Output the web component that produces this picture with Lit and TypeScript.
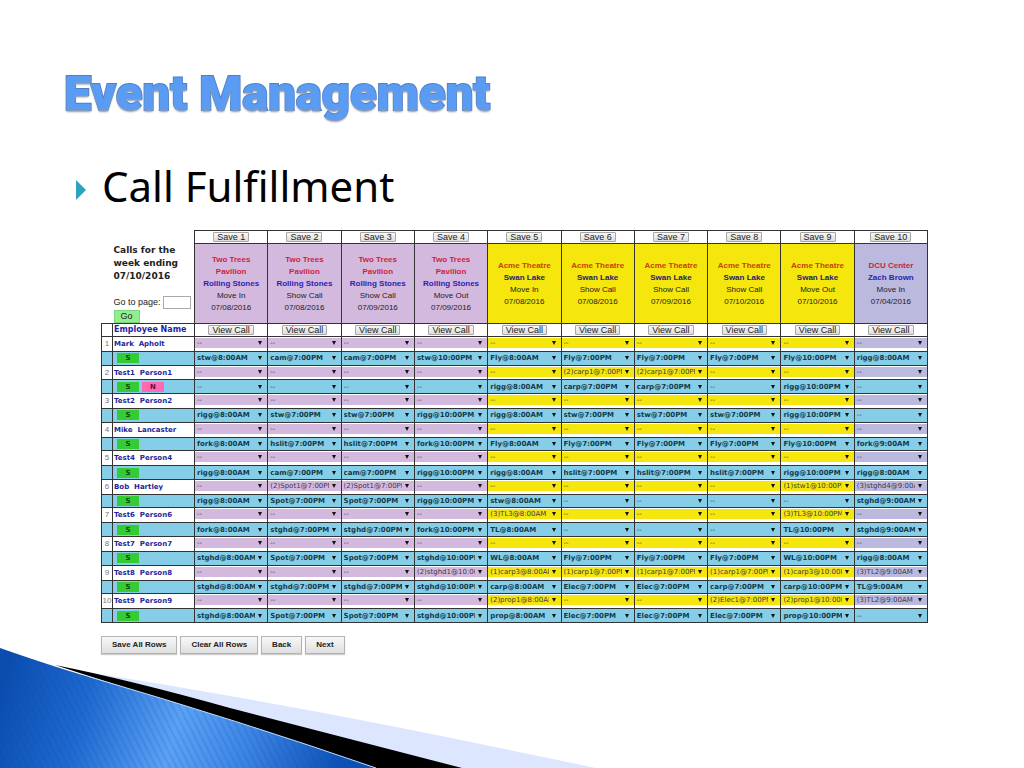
import { LitElement, html, css, svg } from "lit";
import { customElement } from "lit/decorators.js";
import { classMap } from "lit/directives/class-map.js";

interface Call {
  venue: string;
  show: string;
  kind: string;
  date: string;
  tone: string;
}

interface Employee {
  name: string;
  tags: string[];
  requests: string[];
  assigned: string[];
}

const trees = (kind: string, date: string): Call => ({ venue: "Two Trees Pavilion", show: "Rolling Stones", kind, date, tone: "plum" });
const acme = (kind: string, date: string): Call => ({ venue: "Acme Theatre", show: "Swan Lake", kind, date, tone: "yellow" });

const CALLS: Call[] = [
  trees("Move In", "07/08/2016"),
  trees("Show Call", "07/08/2016"),
  trees("Show Call", "07/09/2016"),
  trees("Move Out", "07/09/2016"),
  acme("Move In", "07/08/2016"),
  acme("Show Call", "07/08/2016"),
  acme("Show Call", "07/09/2016"),
  acme("Show Call", "07/10/2016"),
  acme("Move Out", "07/10/2016"),
  { venue: "DCU Center", show: "Zach Brown", kind: "Move In", date: "07/04/2016", tone: "lilac" },
];

const person = (name: string, requests: string, assigned: string, tags = ["S"]): Employee => ({
  name,
  tags,
  requests: requests.split(" "),
  assigned: assigned.split(" "),
});

const EMPLOYEES: Employee[] = [
  person("Mark\u00a0 Apholt", "-- -- -- -- -- -- -- -- -- --",
    "stw@8:00AM cam@7:00PM cam@7:00PM stw@10:00PM Fly@8:00AM Fly@7:00PM Fly@7:00PM Fly@7:00PM Fly@10:00PM rigg@8:00AM"),
  person("Test1\u00a0 Person1", "-- -- -- -- -- (2)carp1@7:00PM (2)carp1@7:00PM -- -- --",
    "-- -- -- -- rigg@8:00AM carp@7:00PM carp@7:00PM -- rigg@10:00PM --", ["S", "N"]),
  person("Test2\u00a0 Person2", "-- -- -- -- -- -- -- -- -- --",
    "rigg@8:00AM stw@7:00PM stw@7:00PM rigg@10:00PM rigg@8:00AM stw@7:00PM stw@7:00PM stw@7:00PM rigg@10:00PM --"),
  person("Mike\u00a0 Lancaster", "-- -- -- -- -- -- -- -- -- --",
    "fork@8:00AM hslit@7:00PM hslit@7:00PM fork@10:00PM Fly@8:00AM Fly@7:00PM Fly@7:00PM Fly@7:00PM Fly@10:00PM fork@9:00AM"),
  person("Test4\u00a0 Person4", "-- -- -- -- -- -- -- -- -- --",
    "rigg@8:00AM cam@7:00PM cam@7:00PM rigg@10:00PM rigg@8:00AM hslit@7:00PM hslit@7:00PM hslit@7:00PM rigg@10:00PM rigg@8:00AM"),
  person("Bob\u00a0 Hartley", "-- (2)Spot1@7:00PM (2)Spot1@7:00PM -- -- -- -- -- (1)stw1@10:00PM (3)stghd4@9:00AM",
    "rigg@8:00AM Spot@7:00PM Spot@7:00PM rigg@10:00PM stw@8:00AM -- -- -- -- stghd@9:00AM"),
  person("Test6\u00a0 Person6", "-- -- -- -- (3)TL3@8:00AM -- -- -- (3)TL3@10:00PM --",
    "fork@8:00AM stghd@7:00PM stghd@7:00PM fork@10:00PM TL@8:00AM -- -- -- TL@10:00PM stghd@9:00AM"),
  person("Test7\u00a0 Person7", "-- -- -- -- -- -- -- -- -- --",
    "stghd@8:00AM Spot@7:00PM Spot@7:00PM stghd@10:00PM WL@8:00AM Fly@7:00PM Fly@7:00PM Fly@7:00PM WL@10:00PM rigg@8:00AM"),
  person("Test8\u00a0 Person8", "-- -- -- (2)stghd1@10:00PM (1)carp3@8:00AM (1)carp1@7:00PM (1)carp1@7:00PM (1)carp1@7:00PM (1)carp3@10:00PM (3)TL2@9:00AM",
    "stghd@8:00AM stghd@7:00PM stghd@7:00PM stghd@10:00PM carp@8:00AM Elec@7:00PM Elec@7:00PM carp@7:00PM carp@10:00PM TL@9:00AM"),
  person("Test9\u00a0 Person9", "-- -- -- -- (2)prop1@8:00AM -- -- (2)Elec1@7:00PM (2)prop1@10:00PM (3)TL2@9:00AM",
    "stghd@8:00AM Spot@7:00PM Spot@7:00PM stghd@10:00PM prop@8:00AM Elec@7:00PM Elec@7:00PM Elec@7:00PM prop@10:00PM --"),
];

@customElement("slide-swoosh")
class SlideSwoosh extends LitElement {
  static styles = css`
    :host { display: block; }
    .art { display: block; }
  `;

  render() {
    return html`<svg class="art" width="600" height="122" viewBox="0 646 600 122" aria-hidden="true">
      ${svg`
      <defs>
        <linearGradient id="sea" gradientUnits="userSpaceOnUse" x1="0" y1="690" x2="330" y2="790">
          <stop offset="0" stop-color="#0a4db0"/>
          <stop offset="0.25" stop-color="#1f69d0"/>
          <stop offset="0.52" stop-color="#5ba2f6"/>
          <stop offset="0.72" stop-color="#3f87e6"/>
          <stop offset="1" stop-color="#0c51b8"/>
        </linearGradient>
        <pattern id="lines" width="6" height="8" patternUnits="userSpaceOnUse" patternTransform="rotate(-27)">
          <path d="M1 0V8" stroke="#0b4499" stroke-width="1" opacity="0.28"/>
        </pattern>
      </defs>
      <path d="M75 670 Q 290 704 500 748 L596 768 H440 Z" fill="#dce6ff"/>
      <path d="M55 665 Q 130 680 230 708 L462 768 H374 Z" fill="#000"/>
      <path d="M0 648 Q 60 669 100 680 Q 240 721 376 768 H0 Z" fill="url(#sea)"/>
      <path d="M0 648 Q 60 669 100 680 Q 240 721 376 768 H0 Z" fill="url(#lines)"/>
      <path d="M90 677 Q 240 721 376 768" fill="none" stroke="#bcdcff" stroke-width="1"/>`}
    </svg>`;
  }
}

@customElement("call-grid")
class CallGrid extends LitElement {
  static styles = css`
    :host { display: block; font-family: "Liberation Sans", Arial, sans-serif; color: #222; }
    .grid { width: 100%; height: 393px; border-collapse: collapse; table-layout: fixed; }
    .col-no { width: 11px; }
    .col-name { width: 82px; }
    th, td { padding: 0; border: 1px solid #333; font-weight: normal; background: #fff; }
    .row-button { height: 13px; }
    .row-head { height: 80px; }
    .corner { border: none; padding: 13px 0 0 12px; text-align: left; vertical-align: top; background: none; }
    .week { margin: 0 0 13px; font: bold 9px/13px "DejaVu Sans", Verdana, sans-serif; }
    .goto { display: flex; align-items: center; gap: 2px; height: 13px; font-size: 9px; white-space: nowrap; }
    .page { box-sizing: border-box; width: 28px; height: 13px; padding: 0 2px; border: 1px solid #aaa; font: 9px/11px "Liberation Sans", sans-serif; }
    button { font-family: "Liberation Sans", Arial, sans-serif; color: #222; }
    .go { display: block; width: 26px; height: 13px; margin: 1px 0 0; padding: 0; border: 1px solid #7cd67c; background: #90ee90; font-size: 9px; line-height: 11px; }
    .mini { display: block; margin: 0 auto; height: 10px; padding: 0 3px; border: 1px solid #a6a6a6; border-radius: 1px; background: linear-gradient(#f8f8f8, #dedede); font-size: 9px; line-height: 8px; }
    .venue-cell { padding: 0 6px; text-align: center; font-size: 8px; line-height: 12px; }
    .venue, .show { font-weight: bold; }
    .venue { color: #cc1f3d; }
    .show { color: #2a22b4; }
    .yellow .venue { color: #c8420a; }
    .yellow .show { color: #221c70; }
    .venue, .show, .kind, .date { display: block; }
    th.plum, .plum select { background-color: #d4b9de; }
    th.yellow, .yellow select { background-color: #f5e60e; }
    th.lilac, .lilac select { background-color: #bbb9de; }
    .title { padding-left: 1px; text-align: left; white-space: nowrap; font: bold 8px/12px "DejaVu Sans", Verdana, sans-serif; color: #1f1fa6; }
    .no { overflow: hidden; text-align: center; font-size: 8px; line-height: 10px; color: #777; }
    .name { padding-left: 1px; text-align: left; white-space: nowrap; font: bold 7px/10px "DejaVu Sans", Verdana, sans-serif; color: #1f1f9a; }
    .request td { vertical-align: top; padding-top: 1px; }
    .request .no, .request .name { vertical-align: middle; padding-top: 0; }
    .assign td { background: #86cee8; vertical-align: middle; }
    .tags { display: flex; gap: 3px; padding-left: 4px; }
    .tag { width: 22px; height: 10px; padding: 0; border: none; font: bold 7px/10px "DejaVu Sans", Verdana, sans-serif; background: #34cb34; color: #0b480b; }
    .tag.n { background: #ff69b4; color: #5a0f38; }
    select {
      display: block; appearance: none; box-sizing: border-box; width: 100%; height: 10px; margin: 0;
      padding: 0 12px 0 2px; border: none; border-radius: 0; color: #3b3844;
      font: 7px/10px "DejaVu Sans", Verdana, sans-serif;
      background: transparent url("data:image/svg+xml,%3Csvg xmlns='http://www.w3.org/2000/svg' width='4' height='4'%3E%3Cpath d='M0 0h4L2 4z' fill='%23111'/%3E%3C/svg%3E") no-repeat right 5px center;
    }
    .assign .filled { font-weight: bold; color: #123a4b; }
    .actions { display: flex; gap: 3px; margin-top: 13px; }
    .action { height: 18px; padding: 0 10px; border: 1px solid #b4b4b4; background: linear-gradient(#f8f8f8, #dfdfdf); font-size: 8px; font-weight: bold; line-height: 16px; box-shadow: 0 1px 1px #ccc; }
  `;

  private picker(value: string, label: string) {
    return html`<select class=${classMap({ filled: value !== "--" })} aria-label=${label}><option>${value}</option></select>`;
  }

  private employee(e: Employee, i: number) {
    return html`
      <tr class="request">
        <td class="no">${i + 1}</td>
        <th class="name" scope="row">${e.name}</th>
        ${e.requests.map((v, c) => html`<td class=${CALLS[c].tone}>${this.picker(v, `${e.name} request ${c + 1}`)}</td>`)}
      </tr>
      <tr class="assign">
        <td></td>
        <td><div class="tags">${e.tags.map((t) => html`<button class="tag ${t.toLowerCase()}">${t}</button>`)}</div></td>
        ${e.assigned.map((v, c) => html`<td>${this.picker(v, `${e.name} call ${c + 1}`)}</td>`)}
      </tr>`;
  }

  render() {
    return html`
      <table class="grid">
        <colgroup><col class="col-no" /><col class="col-name" />${CALLS.map(() => html`<col />`)}</colgroup>
        <thead>
          <tr class="row-button">
            <td class="corner" colspan="2" rowspan="2">
              <p class="week">Calls for the<br />week ending<br />07/10/2016</p>
              <div class="goto"><label for="page">Go to page:</label><input class="page" id="page" type="text" /></div>
              <button class="go">Go</button>
            </td>
            ${CALLS.map((_, i) => html`<td><button class="mini">Save ${i + 1}</button></td>`)}
          </tr>
          <tr class="row-head">
            ${CALLS.map((c) => html`<th class="venue-cell ${c.tone}" scope="col">
              <span class="venue">${c.venue}</span><span class="show">${c.show}</span><span class="kind">${c.kind}</span><span class="date">${c.date}</span>
            </th>`)}
          </tr>
          <tr class="row-button">
            <td></td>
            <th class="title" scope="col">Employee Name</th>
            ${CALLS.map(() => html`<td><button class="mini">View Call</button></td>`)}
          </tr>
        </thead>
        <tbody>${EMPLOYEES.map((e, i) => this.employee(e, i))}</tbody>
      </table>
      <div class="actions">
        ${["Save All Rows", "Clear All Rows", "Back", "Next"].map((t) => html`<button class="action">${t}</button>`)}
      </div>`;
  }
}

@customElement("app-root")
class AppRoot extends LitElement {
  static styles = css`
    :host { display: block; }
    .slide { position: relative; box-sizing: border-box; min-height: 100vh; padding: 60px 96px 0 64px; overflow: hidden; background: #fff; }
    .swoosh { position: absolute; left: 0; bottom: 0; }
    .heading {
      margin: 0; font: 900 49px/68px Roboto, "Liberation Sans", sans-serif;
      color: #5a9cf4; -webkit-text-stroke: 2px #4a80cc; paint-order: stroke fill; white-space: nowrap;
      text-shadow: 0 2px 2px #8e9cb4;
    }
    .bullets { margin: 32px 0 0; padding: 0; list-style: none; }
    .bullet { display: flex; align-items: center; gap: 16px; padding-left: 12px; font: 42px/52px "Noto Sans", "Open Sans", sans-serif; font-variant-ligatures: none; color: #000; }
    .arrow { flex: none; margin-top: 8px; }
    .sheet { margin: 18px 0 0 37px; }
  `;

  render() {
    return html`
      <main class="slide">
        <slide-swoosh class="swoosh"></slide-swoosh>
        <h1 class="heading">Event Management</h1>
        <ul class="bullets">
          <li class="bullet">
            <svg class="arrow" width="10" height="20" viewBox="0 0 10 20" aria-hidden="true"><path d="M0 0L10 10L0 20Z" fill="#2da2bf" /></svg>
            Call Fulfillment
          </li>
        </ul>
        <call-grid class="sheet"></call-grid>
      </main>`;
  }
}
